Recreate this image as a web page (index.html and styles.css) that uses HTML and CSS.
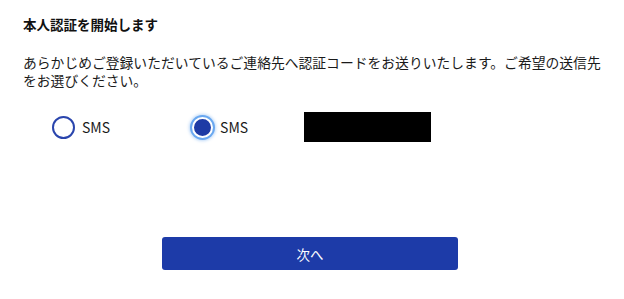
FILE: index.html
```html
<!DOCTYPE html>
<html lang="ja">
<head>
    <meta charset="UTF-8">
    <meta name="viewport" content="width=device-width, initial-scale=1.0">
    <title>本人認証</title>
    <link rel="stylesheet" href="styles.css">
</head>
<body>
    <div class="container">
        <h1 class="title">本人認証を開始します</h1>
        <p class="lead">あらかじめご登録いただいているご連絡先へ認証コードをお送りいたします。ご希望の送信先をお選びください。</p>

        <div class="options">
            <label class="option">
                <span class="radio"></span>
                <span class="option-label">SMS</span>
            </label>
            <label class="option option-second">
                <span class="radio checked"></span>
                <span class="option-label">SMS</span>
            </label>
            <div class="masked"></div>
        </div>

        <div class="actions">
            <button class="next-btn">次へ</button>
        </div>
    </div>
</body>
</html>
```

FILE: styles.css
```css
body {
    margin: 0;
    background: #fff;
    color: #111;
    font-family: "Noto Sans CJK JP", "Noto Sans", sans-serif;
}

.container {
    padding: 14px 22px 0 23px;
}

.title {
    margin: 0;
    font-size: 13.5px;
    line-height: 20px;
    font-weight: bold;
}

.lead {
    margin: 19px 0 0;
    font-size: 13.8px;
    line-height: 18px;
    color: #1a1a1a;
}

.options {
    display: flex;
    align-items: center;
    height: 30px;
    margin-top: 23px;
    padding-left: 29px;
}

.option {
    display: flex;
    align-items: center;
    gap: 7px;
}

.option-second {
    margin-left: 82px;
}

.radio {
    width: 19px;
    height: 19px;
    border: 2px solid #2a45ad;
    border-radius: 50%;
    box-sizing: content-box;
}

.radio.checked {
    width: 17px;
    height: 17px;
    background: #1e3ba5;
    border: 2px solid #fff;
    box-shadow: 0 0 0 2px #6aa8f0, 0 0 3px 3px rgba(110, 170, 240, 0.45);
}

.option-label {
    font-size: 14px;
    color: #1a1a1a;
}

.masked {
    width: 127px;
    height: 30px;
    margin-left: 56px;
    background: #000;
}

.actions {
    margin-top: 95px;
    padding-left: 139px;
}

.next-btn {
    width: 296px;
    height: 33px;
    border: none;
    border-radius: 3px;
    background: #1d3ba8;
    color: #fff;
    font-family: inherit;
    font-size: 13.5px;
    cursor: pointer;
}
```
